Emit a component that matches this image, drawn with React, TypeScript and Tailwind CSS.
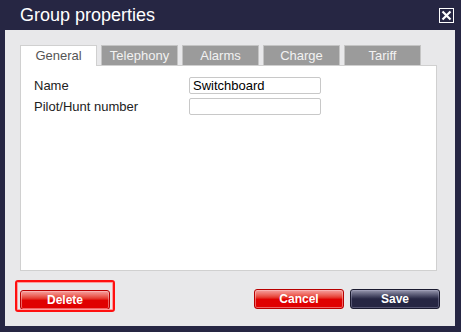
import React from "react";

const tabs = ["General", "Telephony", "Alarms", "Charge", "Tariff"];

function Field({ label, value }: { label: string; value: string }) {
  return (
    <div className="flex items-center h-[21px]">
      <span className="w-[155px] text-[13px] text-[#222]">{label}</span>
      <div className="w-[132px] h-[17px] border border-[#c8c8c8] rounded-[2px] bg-white px-[3px] text-[13px] leading-[15px] text-black">
        {value}
      </div>
    </div>
  );
}

const redBtn =
  "w-[90px] h-[20px] rounded-[3px] border border-[#b80000] bg-gradient-to-b from-[#f4a0a0] via-[#e00000] to-[#e00000] text-white font-bold text-[12px] shadow-[inset_0_0_0_1px_rgba(255,200,200,0.5)]";

export default function App() {
  return (
    <div
      className="w-[461px] h-[332px] bg-[#262643] flex flex-col"
      style={{ fontFamily: '"Liberation Sans", Arial, sans-serif' }}
    >
      {/* title bar */}
      <div className="h-[30px] flex items-center justify-between pl-[20px] pr-[7px]">
        <span className="text-white text-[18px] leading-none">Group properties</span>
        <button className="w-[15px] h-[15px] border border-white flex items-center justify-center">
          <svg width="11" height="11" viewBox="0 0 11 11">
            <path d="M1.5 1.5 L9.5 9.5 M9.5 1.5 L1.5 9.5" stroke="white" strokeWidth="2.2" />
          </svg>
        </button>
      </div>

      {/* body */}
      <div className="flex-1 ml-[5px] mr-[6px] mb-[6px] bg-[#e8e8ea] pt-[15px] px-[15px] flex flex-col">
        <div className="flex gap-[4px] h-[20px]">
          {tabs.map((t, i) => (
            <div
              key={t}
              className={
                i === 0
                  ? "w-[77px] h-[21px] bg-white border border-[#d0d0d0] border-b-0 flex items-center justify-center text-[13px] text-[#555] relative z-10"
                  : "w-[77px] h-[20px] bg-[#9b9b9b] border border-[#c4c4c4] border-b-0 flex items-center justify-center text-[13px] text-[#f2f2f2]"
              }
            >
              {t}
            </div>
          ))}
        </div>
        <div className="w-[417px] h-[206px] bg-white border border-[#d0d0d0] pt-[9px] pl-[13px]">
          <Field label="Name" value="Switchboard" />
          <Field label="Pilot/Hunt number" value="" />
        </div>

        <div className="flex items-center mt-[16px] w-[420px]">
          <div className="relative">
            <div className="absolute left-[-5px] top-[-7px] w-[100px] h-[32px] border-2 border-[#ff1010] rounded-[3px] shadow-[inset_0_0_0_1px_#ff9a9a]" />
            <button className={redBtn}>Delete</button>
          </div>
          <div className="ml-auto flex gap-[6px]">
            <button className={redBtn}>Cancel</button>
            <button className="w-[90px] h-[20px] rounded-[3px] border border-[#1a1a30] bg-gradient-to-b from-[#9a9ab0] via-[#262643] to-[#262643] text-white font-bold text-[12px] shadow-[inset_0_0_0_1px_rgba(180,180,210,0.35)]">
              Save
            </button>
          </div>
        </div>
      </div>
    </div>
  );
}
